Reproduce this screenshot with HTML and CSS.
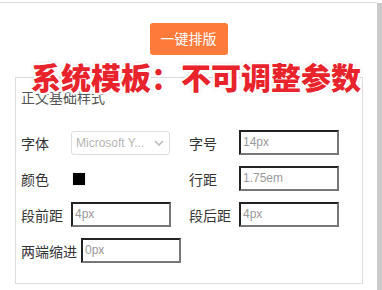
FILE: index.html
```html
<!doctype html>
<html lang="zh-CN">
<head>
	<meta charset="UTF-8" />
	<title>一键排版</title>
	<link rel="stylesheet" href="styles.css">
</head>
<body>
	<div class="page">
		<div class="main">
			<div class="btn-row">
				<a class="btn">一键排版</a>
			</div>
			<div class="tip">系统模板：不可调整参数</div>
			<div class="panel">
				<div class="panel-title">正文基础样式</div>
				<div class="fields">
					<div class="field">
						<span class="label">字体</span>
						<div class="select">
							<span>Microsoft Y...</span>
							<svg width="10" height="6" viewBox="0 0 10 6"><path d="M1 1 L5 5 L9 1" fill="none" stroke="#bbb" stroke-width="1.6"/></svg>
						</div>
					</div>
					<div class="field">
						<span class="label">字号</span>
						<div class="input">14px</div>
					</div>
					<div class="field">
						<span class="label">颜色</span>
						<span class="swatch"></span>
					</div>
					<div class="field">
						<span class="label">行距</span>
						<div class="input">1.75em</div>
					</div>
					<div class="field">
						<span class="label">段前距</span>
						<div class="input">4px</div>
					</div>
					<div class="field">
						<span class="label">段后距</span>
						<div class="input">4px</div>
					</div>
					<div class="field">
						<span class="label">两端缩进</span>
						<div class="input">0px</div>
					</div>
				</div>
			</div>
		</div>
		<div class="scrollbar"></div>
	</div>
</body>
</html>
```

FILE: styles.css
```css
body{margin: 0;padding: 0;font-family: "Liberation Sans", "Noto Sans CJK SC", sans-serif;background: #fff;}

.page{display: flex;height: 290px;overflow: hidden;}
.main{flex: 1;margin-top: 2px;border-top: 1px solid #dcdcdc;position: relative;}
.scrollbar{width: 5px;margin-top: 3px;background: #cacaca;}

.btn-row{display: flex;justify-content: center;padding-top: 20px;}
.btn{width: 78px;height: 32px;line-height: 32px;text-align: center;background: #fe7a3b;color: #fff;font-size: 14px;border-radius: 3px;}

.tip{
	position: absolute;left: 31px;top: 58px;
	font-family: "Noto Sans CJK SC", sans-serif;font-size: 30px;font-weight: 900;line-height: 30px;
	color: #e8232b;white-space: nowrap;
	text-shadow: 2px 0 #fff, -2px 0 #fff, 0 2px #fff, 0 -2px #fff, 1.5px 1.5px #fff, -1.5px 1.5px #fff, 1.5px -1.5px #fff, -1.5px -1.5px #fff, 0 0 4px rgba(0,0,0,.35);
}

.panel{margin: 22px 14px 0 15px;border: 1px solid #dcdcdc;padding: 13px 5px 20px;}
.panel-title{font-size: 14px;line-height: 14px;color: #555;}

.fields{display: grid;grid-template-columns: 168px 168px;row-gap: 11px;margin-top: 25px;}
.field{display: flex;align-items: center;height: 25px;}
.label{min-width: 46px;margin-right: 4px;font-size: 14px;color: #333;}

.select{width: 99px;height: 24px;box-sizing: border-box;border: 1px solid #ddd;border-radius: 3px;display: flex;align-items: center;justify-content: space-between;padding: 0 4px 0 4px;font-size: 12px;color: #b5b5b5;}
.select svg{margin-right: 1px;}

.input{width: 100px;height: 25px;box-sizing: border-box;border: 2px solid #777;border-top-color: #222;border-left-color: #222;padding-left: 2px;font-size: 12px;line-height: 21px;color: #999;}

.swatch{width: 12px;height: 12px;margin-left: 2px;background: #000;box-shadow: 0 0 0 1px #f2f2f2;}
```
